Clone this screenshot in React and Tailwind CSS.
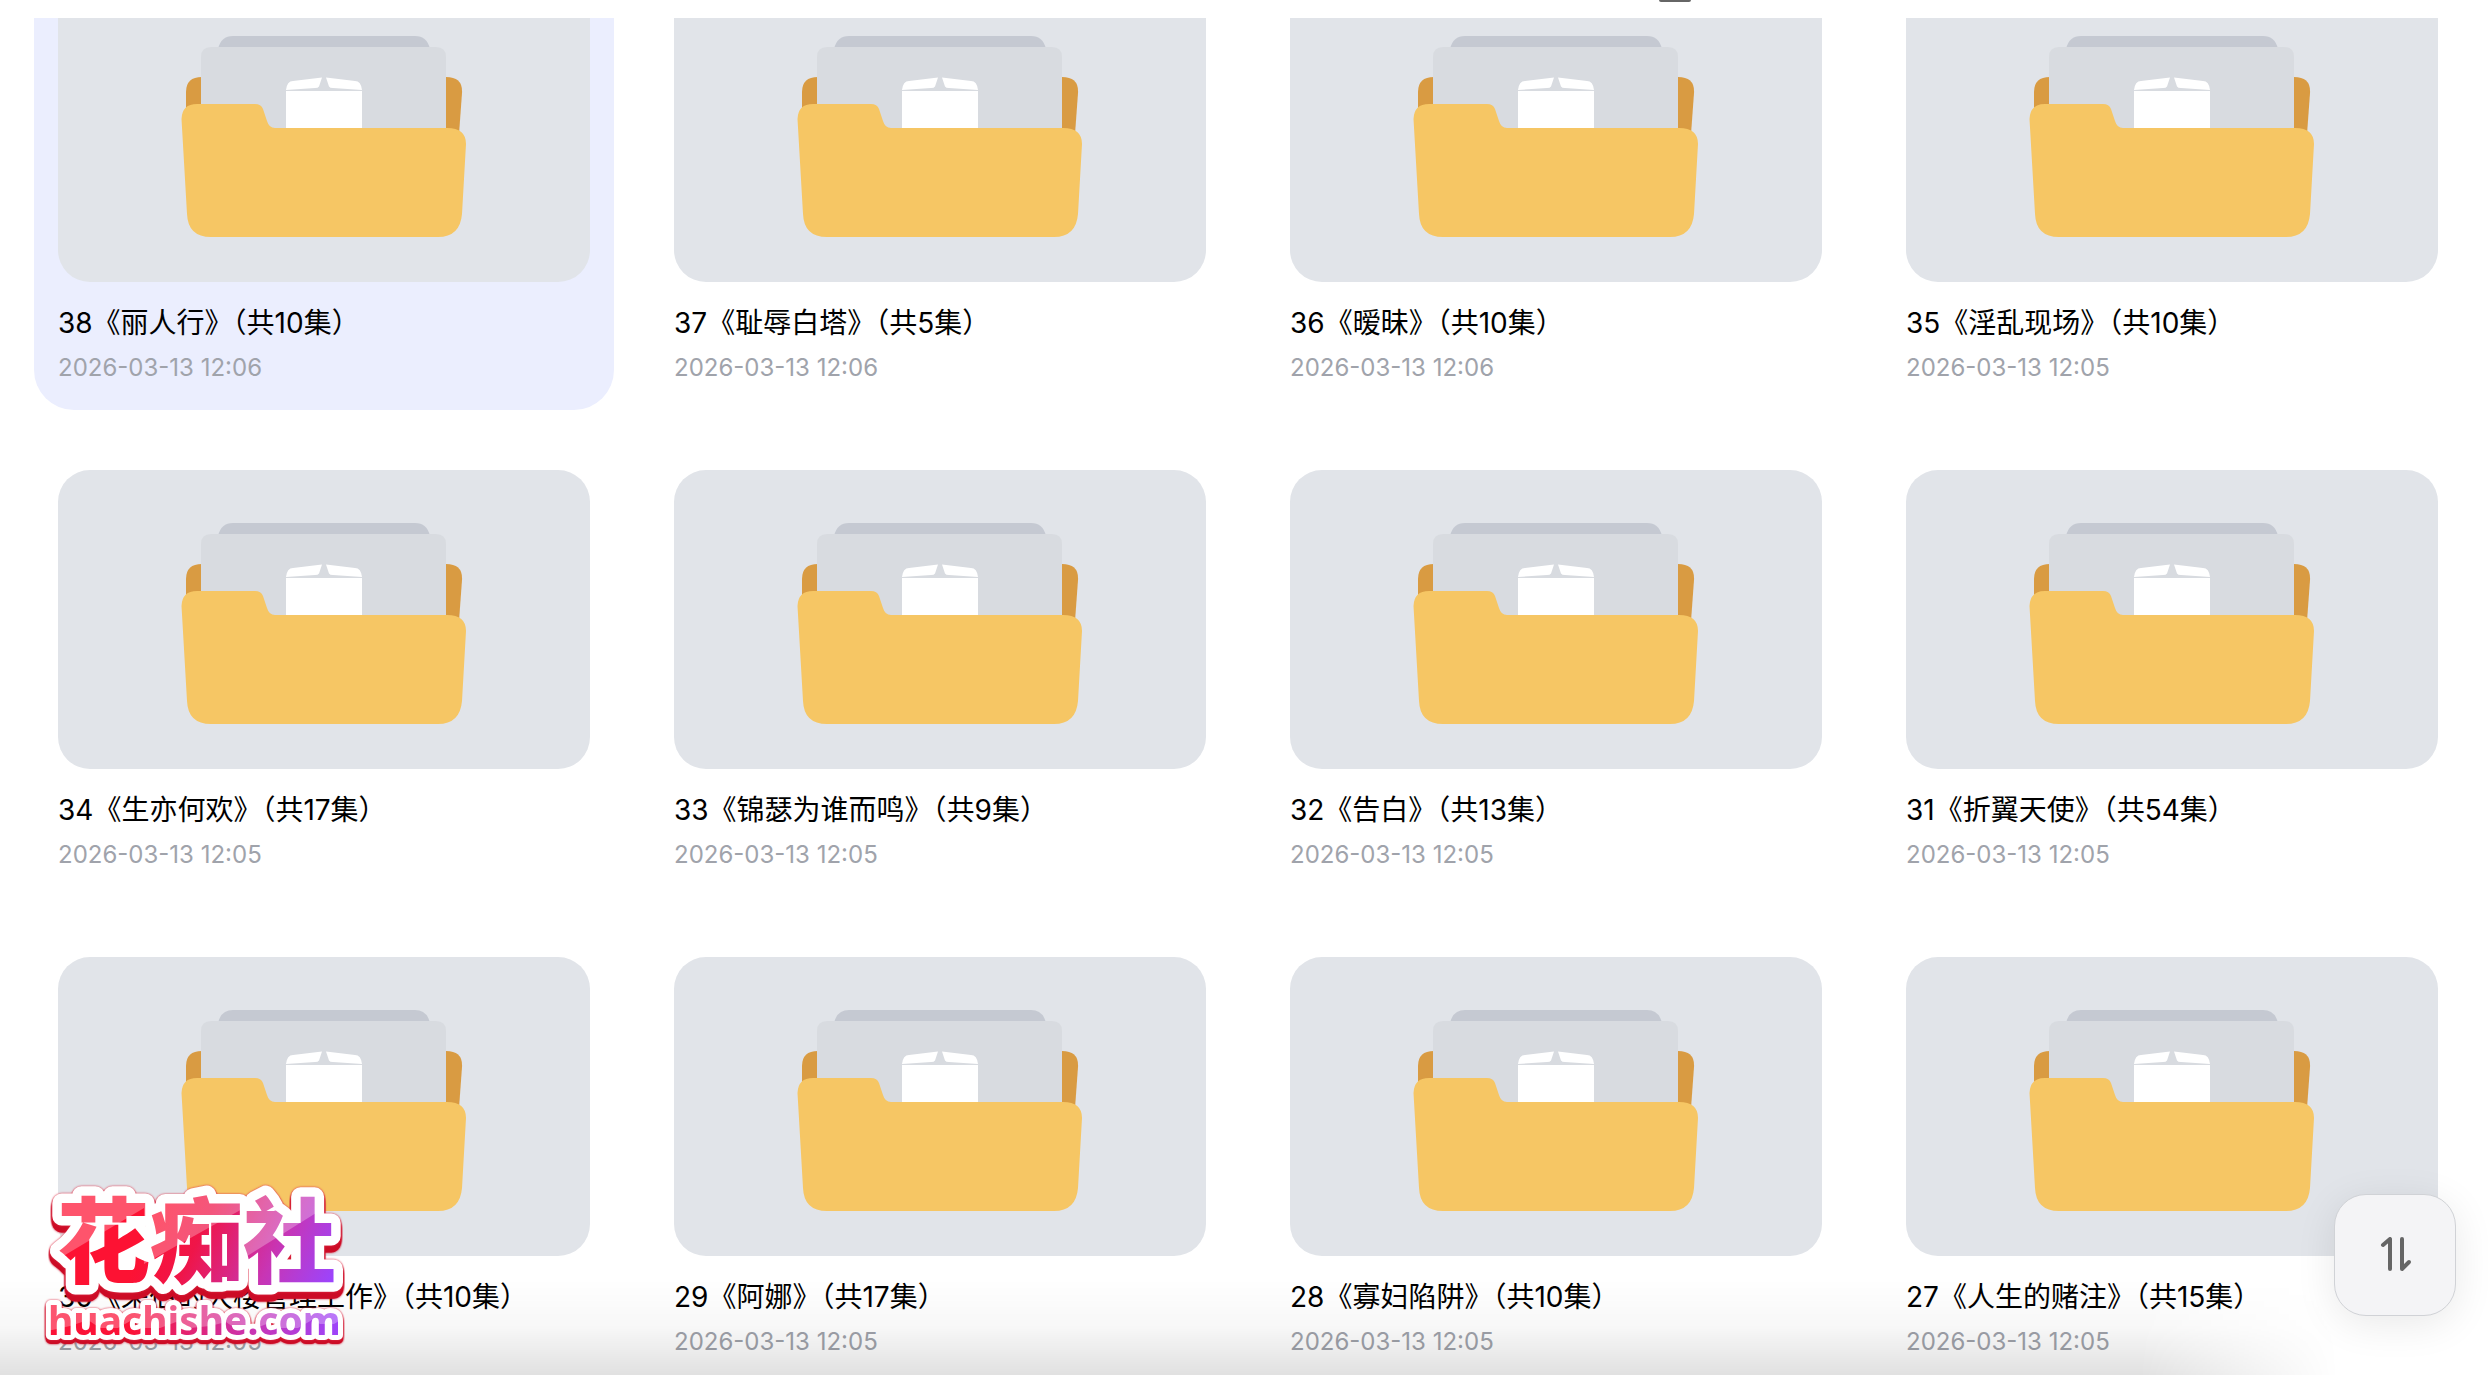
const folders = [
  { title: '38《丽人行》（共10集）', date: '2026-03-13 12:06', selected: true },
  { title: '37《耻辱白塔》（共5集）', date: '2026-03-13 12:06' },
  { title: '36《暧昧》（共10集）', date: '2026-03-13 12:06' },
  { title: '35《淫乱现场》（共10集）', date: '2026-03-13 12:05' },
  { title: '34《生亦何欢》（共17集）', date: '2026-03-13 12:05' },
  { title: '33《锦瑟为谁而鸣》（共9集）', date: '2026-03-13 12:05' },
  { title: '32《告白》（共13集）', date: '2026-03-13 12:05' },
  { title: '31《折翼天使》（共54集）', date: '2026-03-13 12:05' },
  { title: '30《荣伯的大楼管理工作》（共10集）', date: '2026-03-13 12:05' },
  { title: '29《阿娜》（共17集）', date: '2026-03-13 12:05' },
  { title: '28《寡妇陷阱》（共10集）', date: '2026-03-13 12:05' },
  { title: '27《人生的赌注》（共15集）', date: '2026-03-13 12:05' },
];

function FolderArt() {
  return (
    <svg viewBox="0 0 532 299" className="block w-full" aria-hidden="true">
      <path d="M128 160V109Q128 94 144 94H388Q405 94 404 110L400 165Z" fill="#d99b42" />
      <path d="M160 66Q163 53 175 53H357Q369 53 372 66Z" fill="#c5c9d2" />
      <path d="M143 160V74Q143 64 153 64H378Q388 64 388 74V160Z" fill="#d8dbe0" />
      <path d="M228 150V108H304V150Z" fill="#fff" />
      <path d="M228 107Q229 98 235 98L264 94.500L261 103.500Q260 105 257 105Z" fill="#fff" />
      <path d="M304 107Q303 98 297 98L268 94.500L271 103.500Q272 105 275 105Z" fill="#fff" />
      <path
        d="M123.500 136Q124 121 139 121H197Q203 121 205 126L209 138Q211 145 217 145H389Q408 145 408 161L404 231Q402 254 380 254H153Q130 254 129 231Z"
        fill="#f6c664"
      />
    </svg>
  );
}

function FolderCard({ title, date, selected }) {
  return (
    <a href="#" className={selected ? 'block rounded-[40px] bg-[#ebeefe] p-6' : 'block rounded-[40px] p-6'}>
      <div className="overflow-hidden rounded-[32px] bg-[#e1e4e9]">
        <FolderArt />
      </div>
      <h3 className="mt-[21px] truncate text-[28px] leading-10 text-black">{title}</h3>
      <p className="mt-[7px] text-2xl leading-9 text-[#a0a3ab]">{date}</p>
    </a>
  );
}

function Watermark() {
  return (
    <svg
      viewBox="0 0 310 170"
      className="pointer-events-none absolute bottom-[25px] left-10 w-[310px] overflow-visible"
      role="img"
      aria-label="花痴社 huachishe.com"
    >
      <defs>
        <linearGradient id="ink" gradientUnits="userSpaceOnUse" x1="120" y1="30" x2="290" y2="110">
          <stop offset="0" stopColor="#fd1233" />
          <stop offset="0.25" stopColor="#ef1549" />
          <stop offset="0.65" stopColor="#c835b4" />
          <stop offset="1" stopColor="#9a45ff" />
        </linearGradient>
        <linearGradient id="inkLine" gradientUnits="userSpaceOnUse" x1="0" y1="0" x2="305" y2="0">
          <stop offset="0.3" stopColor="#fb1237" />
          <stop offset="0.7" stopColor="#c835b4" />
          <stop offset="1" stopColor="#9a45ff" />
        </linearGradient>
        <pattern id="glossy" patternUnits="userSpaceOnUse" width="310" height="170">
          <rect width="310" height="170" fill="url(#ink)" />
          <path d="M0 0H104V28L20 78H0ZM104 0H204V28L104 84ZM204 0H300V18L204 78Z" fill="#fff" fillOpacity="0.28" />
        </pattern>
        <pattern id="glossyLine" patternUnits="userSpaceOnUse" width="310" height="170">
          <rect width="310" height="170" fill="url(#inkLine)" />
          <path
            d="M0 120H310V134L294 144H280L272 140L258 148H240L232 142L216 148H195L186 142L170 146L150 148L136 142L120 148H105L92 140L78 148H60L48 140L30 146L12 150H0Z"
            fill="#fff"
            fillOpacity="0.28"
          />
        </pattern>
      </defs>
      <text
        x="17"
        y="96"
        fontSize="93"
        fontWeight="900"
        fill="url(#glossy)"
        stroke="#fff"
        strokeWidth="19"
        strokeLinejoin="round"
        paintOrder="stroke"
        className="font-['Noto_Sans_CJK_SC',sans-serif] [filter:drop-shadow(0_0_1px_#e0334c)_drop-shadow(0_2px_0_#cc0c26)_drop-shadow(0_2px_0_#cc0c26)_drop-shadow(0_3px_0_#cc0c26)]"
      >
        花痴社
      </text>
      <text
        x="8"
        y="155"
        fontSize="39"
        fontWeight="700"
        fill="url(#glossyLine)"
        stroke="#fff"
        strokeWidth="10"
        strokeLinejoin="round"
        paintOrder="stroke"
        className="font-['Noto_Sans',sans-serif] [filter:drop-shadow(0_0_1px_#e0334c)_drop-shadow(0_2px_0_#cc0c26)_drop-shadow(0_2px_0_#cc0c26)]"
      >
        huachishe.com
      </text>
    </svg>
  );
}

function SortButton() {
  return (
    <button
      type="button"
      aria-label="排序"
      className="absolute right-8 bottom-[59px] flex size-[122px] items-center justify-center rounded-[32px] border border-[#d0d2d6] bg-[#f4f4f6] shadow-[0_8px_40px_rgba(0,0,0,0.09)]"
    >
      <svg viewBox="0 0 36 36" className="size-9" fill="none" stroke="#666" strokeWidth="4" strokeLinecap="round" strokeLinejoin="round">
        <path d="M6 8L13 2V32" />
        <path d="M25 2V32L32 25" />
      </svg>
    </button>
  );
}

export default function App() {
  return (
    <div className="relative flex h-screen flex-col overflow-hidden bg-white font-['Inter','Noto_Sans_CJK_SC',sans-serif]">
      <header className="h-[18px] shrink-0">
        <div className="ml-[66.667%] h-[2px] w-8 rounded-b-[2px] bg-[#666]" />
      </header>
      <main className="min-h-0 flex-1 overflow-hidden pr-[26px] pl-[34px]">
        <div className="-mt-[59px] grid grid-cols-4 gap-9">
          {folders.map((f) => (
            <FolderCard key={f.title} {...f} />
          ))}
        </div>
      </main>
      <div className="pointer-events-none absolute inset-x-0 bottom-0 h-24 bg-linear-to-b from-transparent via-black/3 to-black/12 mask-r-from-86% mask-r-to-94%" />
      <Watermark />
      <SortButton />
    </div>
  );
}
